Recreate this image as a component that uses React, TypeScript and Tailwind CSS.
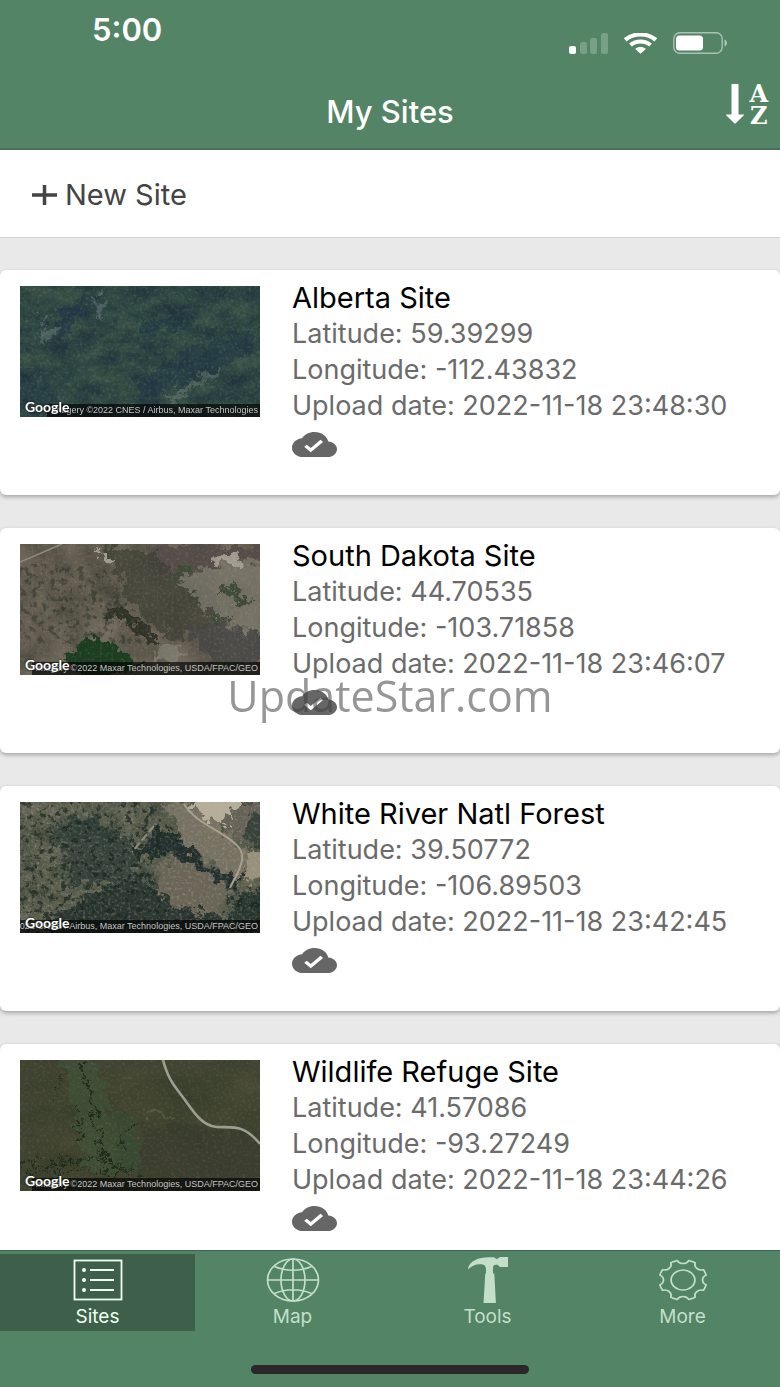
import type { ReactNode } from "react";

type Site = {
  name: string;
  latitude: string;
  longitude: string;
  uploaded: string;
  credit: string;
  terrain: ReactNode;
};

function Noise({
  id,
  seed,
  frequency,
  r,
  g,
  b,
}: {
  id: string;
  seed: number;
  frequency: string;
  r: string;
  g: string;
  b: string;
}) {
  return (
    <>
      <filter id={id} x="0" y="0" width="100%" height="100%" colorInterpolationFilters="sRGB">
        <feTurbulence type="fractalNoise" baseFrequency={frequency} numOctaves="6" seed={seed} />
        <feColorMatrix values="1 0 0 0 0  1 0 0 0 0  1 0 0 0 0  0 0 0 0 1" />
        <feComponentTransfer>
          <feFuncR type="table" tableValues={r} />
          <feFuncG type="table" tableValues={g} />
          <feFuncB type="table" tableValues={b} />
        </feComponentTransfer>
      </filter>
      <filter id={`${id}-rough`} x="-20%" y="-20%" width="140%" height="140%" colorInterpolationFilters="sRGB">
        <feTurbulence type="fractalNoise" baseFrequency="0.1" numOctaves="5" seed={seed} result="n" />
        <feDisplacementMap in="SourceGraphic" in2="n" scale="26" xChannelSelector="R" yChannelSelector="G" result="d" />
        <feGaussianBlur in="d" stdDeviation="0.7" />
      </filter>
      <filter id={`${id}-specks`} x="0" y="0" width="100%" height="100%" colorInterpolationFilters="sRGB">
        <feTurbulence type="fractalNoise" baseFrequency="0.17" numOctaves="4" seed={seed + 3} />
        <feColorMatrix values="0 0 0 0 0.1  0 0 0 0 0.15  0 0 0 0 0.12  7 0 0 0 -3.7" result="s" />
        <feComposite in="s" in2="SourceGraphic" operator="in" />
      </filter>
      <filter id={`${id}-grain`} x="0" y="0" width="100%" height="100%" colorInterpolationFilters="sRGB">
        <feTurbulence type="fractalNoise" baseFrequency="0.35" numOctaves="2" seed={seed + 9} />
        <feColorMatrix values="0 0 0 0 0.7  0 0 0 0 0.75  0 0 0 0 0.7  0 3 0 0 -1.5" />
      </filter>
      <rect width="240" height="131" filter={`url(#${id})`} />
    </>
  );
}

function AlbertaTerrain() {
  return (
    <>
      <Noise
        id="alberta"
        seed={8}
        frequency="0.035 0.06"
        r="0.12 0.14 0.17 0.2 0.24 0.28"
        g="0.19 0.22 0.26 0.3 0.33 0.36"
        b="0.24 0.25 0.26 0.27 0.29 0.32"
      />
      <g filter="url(#alberta-rough)">
        <path d="M30 40l16-18 22-14-8 22-20 20z" fill="#1f3448" opacity=".6" />
        <path d="M115 100l60-40 60-20v30l-60 20-50 26z" fill="#1f3547" opacity=".5" />
        <path d="M120 34l50-6 10 10-54 10z" fill="#1c3344" opacity=".5" />
        <path d="M0 90l30 8 10 20-40 4z" fill="#1f3547" opacity=".5" />
        <path d="M20 48l18-6-2 10-12 2zM18 34l8-6-2 10zM74 8l6-2 4 26-6 4z" fill="#7b8a90" opacity=".4" />
        <path d="M142 116l32-22 22-12 4 6-26 14-24 16z" fill="#7b8a88" opacity=".4" />
      </g>
      <rect width="240" height="131" opacity=".15" filter="url(#alberta-grain)" />
      <rect width="240" height="131" opacity=".15" filter="url(#alberta-specks)" />
    </>
  );
}

function DakotaTerrain() {
  return (
    <>
      <Noise
        id="dakota"
        seed={21}
        frequency="0.03"
        r="0.24 0.3 0.36 0.41 0.45 0.48"
        g="0.23 0.29 0.34 0.38 0.42 0.45"
        b="0.2 0.25 0.29 0.33 0.37 0.4"
      />
      <g filter="url(#dakota-rough)">
        <path d="M130 2h120v18l-110 8z" fill="#544b47" opacity=".9" />
        <path d="M84 0l40 4 34 26 40 20-4 30-40 16-30-22-16-20z" fill="#3c3d33" opacity=".7" />
        <path d="M156 36l50-20 50 4v76l-60-22z" fill="#7d7a6d" opacity=".75" />
        <path d="M165 84l40-4 50 14v28h-60z" fill="#484745" opacity=".85" />
        <path d="M42 114l30-24 24 12 26 20-50 14z" fill="#1c3d20" />
        <path d="M86 62l30 12 24 26-6 4-26-24-26-12z" fill="#2c3025" opacity=".9" />
        <path d="M196 46l12-4 26 18-10 4zM184 78l18-8 10 6-14 6zM150 28l16-6 8 8-16 4z" fill="#3f4a38" />
        <path d="M192 18l14-8 18 6-4 6z" fill="#b0aa9e" opacity=".8" />
        <path d="M78 4l8 2 8 12-4 2z" fill="#a09c92" />
        <path d="M134 108l24-6 8 12-30 4z" fill="#858275" opacity=".7" />
      </g>
      <path d="M0 18L42 0" stroke="#8d897e" strokeWidth="1.5" />
      <path d="M0 20h80l30 40 20 40H0z" opacity=".4" filter="url(#dakota-specks)" />
      <rect width="240" height="131" opacity=".15" filter="url(#dakota-grain)" />
    </>
  );
}

function WhiteRiverTerrain() {
  return (
    <>
      <Noise
        id="river"
        seed={5}
        frequency="0.05"
        r="0.2 0.26 0.32 0.37 0.42 0.48"
        g="0.24 0.29 0.34 0.38 0.41 0.46"
        b="0.2 0.24 0.28 0.31 0.35 0.4"
      />
      <g filter="url(#river-rough)">
        <path d="M140 0h30l60 50-10 28-50-32z" fill="#777162" />
        <path d="M170 -8h50l-12 32-22-4z" fill="#b5ad98" />
        <path d="M214 0h40v50l-50-24z" fill="#676257" />
        <path d="M60 16l40 10 20 26-10 28-60 0-6-30z" fill="#293934" opacity=".7" />
        <path d="M30 30l40-20 10 10-40 24z" fill="#2d3d36" opacity=".7" />
        <path d="M110 56l26-30 22 6 32 34 30 8-8 10-30-6-34-30-30 12z" fill="#24312e" />
        <path d="M30 112l60-26 30-12 44 32 40 8v24H30z" fill="#26332e" opacity=".85" />
        <path d="M142 62l16-6 56 32-16 24-40-6-24-20z" fill="#6a6557" />
        <path d="M216 94l40-6v44h-50z" fill="#26352f" opacity=".9" />
        <path d="M226 12l24-2v34h-22z" fill="#2d3a33" opacity=".8" />
        <path d="M226 56l24-8v26l-30 6z" fill="#a69c86" opacity=".8" />
      </g>
      <path d="M0 0h130l60 70-60-20 10 50 50 14v20H0zM206 84h34v47h-40z" opacity=".7" filter="url(#river-specks)" />
      <path d="M164 2c10 16 26 22 38 30s22 14 20 26-8 18-12 28" fill="none" stroke="#a89f8b" strokeWidth="2" />
      <path d="M134 24l-22 26" stroke="#8f8b7c" strokeWidth="2" strokeDasharray="8 3" />
      <rect width="240" height="131" opacity=".3" filter="url(#river-grain)" />
    </>
  );
}

function RefugeTerrain() {
  return (
    <>
      <Noise
        id="refuge"
        seed={14}
        frequency="0.015 0.03"
        r="0.2 0.22 0.24 0.26 0.28 0.3"
        g="0.22 0.24 0.26 0.27 0.29 0.32"
        b="0.16 0.17 0.18 0.19 0.21 0.23"
      />
      <g filter="url(#refuge-rough)">
        <path d="M40 -6h34l34 120-40-4z" fill="#3f5138" opacity=".7" />
        <path d="M88 60l24-8 12 60-24 6z" fill="#384a32" opacity=".8" />
        <path d="M124 66l90 4 30 20v30H120z" fill="#37372d" opacity=".5" />
        <path d="M124 50l26 4 4 4-28-1z" fill="#5d6547" opacity=".6" />
      </g>
      <g fill="none" stroke="#1f2b1b" filter="url(#refuge-rough)">
        <path d="M62 4c4 20 10 34 14 54s6 34 16 46l20 14" strokeWidth="4" strokeDasharray="5 1 3 2" />
        <path d="M118 62c-8 6-14 14-18 24" strokeWidth="2" />
        <path d="M56 46l2 24 2 18" strokeWidth="3" strokeDasharray="3 4" />
        <path d="M4 102l30 2 34-6 44 10" strokeWidth="5" strokeDasharray="4 3 2 2" />
        <path d="M4 112l30-1 34 0 50 4" strokeWidth="4" strokeDasharray="3 4" />
        <path d="M34 36l8-20" strokeWidth="2" strokeDasharray="2 6" />
      </g>
      <path
        d="M143 0c6 22 12 26 22 40s18 26 32 27 26-4 43 17"
        fill="none"
        stroke="#9c9e91"
        strokeWidth="2.6"
      />
      <rect width="240" height="131" opacity=".1" filter="url(#refuge-grain)" />
    </>
  );
}

const sites: Site[] = [
  {
    name: "Alberta Site",
    latitude: "59.39299",
    longitude: "-112.43832",
    uploaded: "2022-11-18 23:48:30",
    credit: "Imagery ©2022 CNES / Airbus, Maxar Technologies",
    terrain: <AlbertaTerrain />,
  },
  {
    name: "South Dakota Site",
    latitude: "44.70535",
    longitude: "-103.71858",
    uploaded: "2022-11-18 23:46:07",
    credit: "Imagery ©2022 Maxar Technologies, USDA/FPAC/GEO",
    terrain: <DakotaTerrain />,
  },
  {
    name: "White River Natl Forest",
    latitude: "39.50772",
    longitude: "-106.89503",
    uploaded: "2022-11-18 23:42:45",
    credit: "2022 CNES / Airbus, Maxar Technologies, USDA/FPAC/GEO",
    terrain: <WhiteRiverTerrain />,
  },
  {
    name: "Wildlife Refuge Site",
    latitude: "41.57086",
    longitude: "-93.27249",
    uploaded: "2022-11-18 23:44:26",
    credit: "Imagery ©2022 Maxar Technologies, USDA/FPAC/GEO",
    terrain: <RefugeTerrain />,
  },
];

function StatusIcons() {
  return (
    <div className="flex items-center gap-4">
      <svg width="39" height="21" viewBox="0 0 39 21" fill="#fff" aria-hidden="true">
        <rect y="13" width="7" height="8" rx="2" />
        <g opacity=".22">
          <rect x="11" y="9" width="7" height="12" rx="2" />
          <rect x="21" y="5" width="7" height="16" rx="2" />
          <rect x="32" width="7" height="21" rx="2" />
        </g>
      </svg>
      <svg width="33" height="21" viewBox="0 0 33 21" fill="none" stroke="#fff" aria-hidden="true">
        <path d="M1.2 6.800C9.500-.3 23.500-.3 31.800 6.800" strokeWidth="4.200" />
        <path d="M6.500 12c5.500-4.800 14.500-4.800 20 0" strokeWidth="4" />
        <path d="M11.200 16c3-2.600 7.600-2.600 10.600 0l-5.300 4.800z" fill="#fff" stroke="none" />
      </svg>
      <svg width="55" height="22" viewBox="0 0 55 22" aria-hidden="true">
        <rect x=".8" y=".8" width="48.400" height="20.400" rx="6" fill="none" stroke="#fff" strokeWidth="1.400" opacity=".5" />
        <rect x="3" y="3.500" width="27" height="15" rx="3.500" fill="#fff" />
        <path d="M51.500 7.500c3.200 1.200 3.200 5.800 0 7z" fill="#fff" opacity=".55" />
      </svg>
    </div>
  );
}

function CloudDoneIcon() {
  return (
    <svg
      className="h-[25px] w-[45px]"
      viewBox="0 4 24 16"
      preserveAspectRatio="none"
      fill="#666"
      role="img"
      aria-label="Uploaded"
    >
      <path d="M19.35 10.04C18.67 6.590 15.640 4 12 4 9.110 4 6.600 5.640 5.350 8.040 2.340 8.360 0 10.910 0 14c0 3.310 2.690 6 6 6h13c2.760 0 5-2.240 5-5 0-2.640-2.050-4.780-4.650-4.960zM10 17l-3.500-3.500 1.410-1.410L10 14.170 15.180 9l1.410 1.410L10 17z" />
    </svg>
  );
}

function ListIcon() {
  return (
    <svg width="50" height="42" viewBox="0 0 50 42" fill="none" stroke="currentColor" strokeWidth="1.800" aria-hidden="true">
      <rect x="1.500" y="1.500" width="47" height="39" />
      <path d="M17 11h24M17 21h24M17 31h24" />
      <g fill="currentColor" stroke="none">
        <circle cx="11" cy="11" r="2" />
        <circle cx="11" cy="21" r="2" />
        <circle cx="11" cy="31" r="2" />
      </g>
    </svg>
  );
}

function GlobeIcon() {
  return (
    <svg width="54" height="44" viewBox="0 0 54 44" fill="none" stroke="currentColor" strokeWidth="1.700" aria-hidden="true">
      <ellipse cx="27" cy="22" rx="25.500" ry="21" />
      <ellipse cx="27" cy="22" rx="12" ry="21" />
      <path d="M27 1v42M1.500 22h51M8.500 8.500c11 5 26 5 37 0M8.500 35.500c11-5 26-5 37 0" />
    </svg>
  );
}

function HammerIcon() {
  return (
    <svg width="42" height="46" viewBox="0 0 42 46" fill="currentColor" aria-hidden="true">
      <path d="M1 12.500C1.500 4 12 .3 22 .3h4.500c1.500 0 2 1.700 3.500 1.700L33 0h8v10h-8l-2.500-2.200h-1.500c-2 0-3 1.200-3 3V17h-7v-4.500C19 7.800 16 7 12 7.300 7 7.800 4 9.500 1 12.500z" />
      <path d="M18.300 16.500h9l1.600 29.500H16.500z" />
    </svg>
  );
}

function toothPoint(degrees: number) {
  const a = (degrees * Math.PI) / 180;
  return `${(20 * Math.cos(a)).toFixed(2)} ${(20 * Math.sin(a)).toFixed(2)}`;
}

// Eight teeth joined by concave notches.
const gearPath =
  `M${toothPoint(14)}` +
  [22.5, 67.5, 112.5, 157.5, 202.5, 247.5, 292.5, 337.5]
    .map((a) => `A20 20 0 0 1 ${toothPoint(a + 8.5)}A5.400 5.400 0 0 0 ${toothPoint(a + 36.5)}`)
    .join("") +
  "Z";

function GearIcon() {
  return (
    <svg
      width="50"
      height="42"
      viewBox="-21 -21 42 42"
      preserveAspectRatio="none"
      fill="none"
      stroke="currentColor"
      strokeWidth="1.500"
      strokeLinejoin="round"
      aria-hidden="true"
    >
      <path d={gearPath} />
      <circle r="10" />
    </svg>
  );
}

const tabs = [
  { label: "Sites", icon: <ListIcon />, active: true },
  { label: "Map", icon: <GlobeIcon />, active: false },
  { label: "Tools", icon: <HammerIcon />, active: false },
  { label: "More", icon: <GearIcon />, active: false },
];

function SiteCard({ site }: { site: Site }) {
  return (
    <li className="flex h-[225px] shrink-0 gap-8 rounded-md bg-white pt-4 pr-4 pl-5 shadow-[0_2px_4px_rgba(0,0,0,0.3)]">
      <div className="relative h-[131px] w-60 shrink-0 overflow-hidden">
        <svg className="h-full w-full" viewBox="0 0 240 131" role="img" aria-label={`Satellite view of ${site.name}`}>
          {site.terrain}
        </svg>
        <div className="absolute right-0 bottom-0 bg-black/65 pr-0.5 pl-1 font-['Liberation_Sans',sans-serif] text-[9px] leading-[13px] whitespace-nowrap text-[#c4c4c4]">
          {site.credit}
        </div>
        <div className="absolute bottom-0 left-[5px] font-['Lato',sans-serif] text-sm leading-5 font-bold text-white [text-shadow:0_0_2px_#222,0_0_2px_#222]">
          Google
        </div>
      </div>
      <div className="min-w-0 text-[27px] leading-9 whitespace-nowrap text-[#6b6b6b]">
        <h2 className="-mt-1.5 text-[29px] leading-9 text-black">{site.name}</h2>
        <p>Latitude: {site.latitude}</p>
        <p>Longitude: {site.longitude}</p>
        <p>Upload date: {site.uploaded}</p>
        <div className="pt-2">
          <CloudDoneIcon />
        </div>
      </div>
    </li>
  );
}

export default function App() {
  return (
    <div className="relative flex h-screen flex-col overflow-hidden bg-[#e9e9e9] font-['Inter','Liberation_Sans',sans-serif]">
      <header className="shrink-0 border-b-2 border-[#48705a] bg-[#528465] text-white">
        <div className="flex h-[75px] items-start justify-between pr-[52px] pl-[92px]">
          <div className="pt-3 text-[31px] leading-9 font-semibold">5:00</div>
          <div className="pt-8">
            <StatusIcons />
          </div>
        </div>
        <div className="grid h-[73px] grid-cols-[1fr_auto_1fr] items-center">
          <h1 className="col-start-2 text-[31px] leading-9 font-medium">My Sites</h1>
          <button type="button" aria-label="Sort by name" className="mr-3 flex gap-1 self-start justify-self-end pt-2">
            <svg width="20" height="42" viewBox="0 0 20 42" fill="currentColor" aria-hidden="true">
              <path d="M6.500 1.500Q6.500 1 7 1h6q.5 0 .5.500V31.500h5q1 0 .4.800l-8.200 7.900q-.7.600-1.400 0L1.100 32.300Q.5 31.500 1.500 31.500H6.500z" />
            </svg>
            <span className="flex flex-col items-center font-['DejaVu_Serif',serif] text-2xl leading-[22px] font-bold">
              <span>A</span>
              <span>Z</span>
            </span>
          </button>
        </div>
      </header>

      <main className="min-h-0 flex-1 overflow-y-auto [scrollbar-width:none]">
        <button
          type="button"
          className="flex h-[88px] w-full items-center gap-2 border-b border-[#d4d4d4] bg-white pt-0.5 pl-8 text-[29px] leading-9 text-[#444]"
        >
          <svg width="25" height="22" viewBox="0 0 25 22" fill="none" stroke="currentColor" strokeWidth="3.500" aria-hidden="true">
            <path d="M12.500 1v20M0 11h25" />
          </svg>
          New Site
        </button>
        <ul className="flex flex-col gap-[33px] py-8">
          {sites.map((site) => (
            <SiteCard key={site.name} site={site} />
          ))}
        </ul>
      </main>

      <nav className="shrink-0 border-t border-[#3d6450] bg-[#528465] pt-[3px]">
        <div className="grid grid-cols-4">
          {tabs.map((tab) => (
            <a
              key={tab.label}
              href={`#${tab.label.toLowerCase()}`}
              aria-current={tab.active ? "page" : undefined}
              className={
                tab.active
                  ? "flex h-[77px] flex-col items-center bg-[#3e604b] text-[#f0fff0]"
                  : "flex h-[77px] flex-col items-center text-[#c3dfca]"
              }
            >
              <span className="flex h-[52px] items-center">{tab.icon}</span>
              <span className="text-[19px] leading-[22px]">{tab.label}</span>
            </a>
          ))}
        </div>
        <div className="flex h-14 items-end justify-center pb-[13px]">
          <div className="h-[9px] w-[278px] rounded-full bg-[#2b262b]" />
        </div>
      </nav>

      <div className="pointer-events-none absolute inset-0 flex items-center justify-center pt-1 font-['Open_Sans',sans-serif] text-[43px] leading-none text-[#404040]/55">
        UpdateStar.com
      </div>
    </div>
  );
}
